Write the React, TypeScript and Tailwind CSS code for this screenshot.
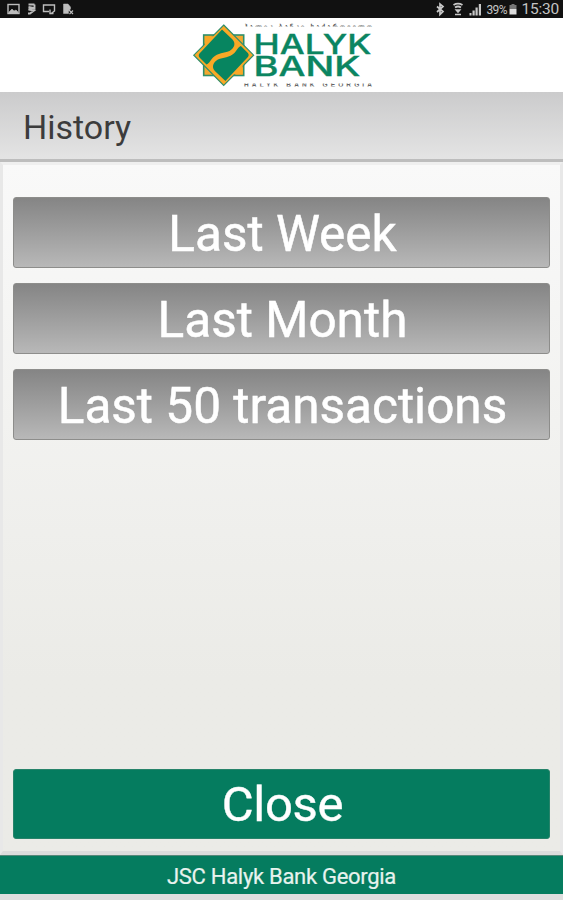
const periods = [
  { id: "week", label: "Last Week" },
  { id: "month", label: "Last Month" },
  { id: "fifty", label: "Last 50 transactions" },
];

function HalykLogo() {
  return (
    <svg width="184" height="66" viewBox="191 22 184 66" role="img" aria-label="Halyk Bank Georgia">
      <defs>
        <clipPath id="topLine">
          <rect x="240" y="23" width="134" height="3.6" />
        </clipPath>
        <clipPath id="bottomLine">
          <rect x="240" y="83.5" width="134" height="3" />
        </clipPath>
      </defs>

      {/* eight pointed star */}
      <rect x="203.7" y="35" width="40" height="40.5" fill="#f3a82f" stroke="#2f8f6b" strokeWidth="1.6" />
      <path d="M223.7 25 253.6 55.2 223.7 85.4 193.8 55.2Z" fill="#f9a826" stroke="#2f8f6b" strokeWidth="1.2" />
      <path d="M204.800 36.200h19.400l-9.800 9.800-9.600 9.800zM242.600 74.300h-19.400l9.800-9.800 9.600-9.800z" fill="#f9a826" />
      <path
        d="M222 29.500L232.500 39.500C236 43.500 234.500 48 229.500 51C224 53.500 218 52.500 213 57.500C210.500 60 209.500 63.500 206.500 64.500L199.500 57.500C198.500 56.500 198.500 54.500 199.500 53.500Z"
        fill="#078560"
      />
      <path
        d="M225.400 80.900L214.900 70.900C211.400 66.900 212.900 62.400 217.900 59.400C223.400 56.900 229.400 57.900 234.400 52.900C236.900 50.400 237.900 46.900 240.900 45.900L247.900 52.900C248.900 53.900 248.900 55.900 247.900 56.900Z"
        fill="#078560"
      />

      <text x="244" y="29" textLength="128" fontSize="6.5" fontWeight="700" clipPath="url(#topLine)" fill="#555" className="font-['DejaVu_Sans',sans-serif]">
        ჰალიკ ბანკი საქართველო
      </text>
      <g fill="#0b8561" stroke="#0b8561" strokeWidth="0.3" fontSize="26.5" fontWeight="500" className="font-['Inter',sans-serif]">
        <text x="253.500" y="53.500" textLength="118" lengthAdjust="spacingAndGlyphs">HALYK</text>
        <text x="253.500" y="76" textLength="107" lengthAdjust="spacingAndGlyphs">BANK</text>
      </g>
      <text x="244" y="86.500" textLength="128" fontSize="6.500" fontWeight="700" clipPath="url(#bottomLine)" fill="#666" className="font-['Liberation_Sans',sans-serif]">
        HALYK BANK GEORGIA
      </text>
    </svg>
  );
}

function StatusBar() {
  return (
    <div className="flex h-[18px] shrink-0 items-center justify-between bg-[#111] pl-[7px] pr-[4px] text-[#c4c4c4]">
      <svg width="68" height="18" viewBox="7 0 68 18" fill="none" stroke="#bdbdbd" strokeWidth="1.4">
        <rect x="8" y="4.5" width="11" height="9" />
        <path d="M9 12l3-3 2 2 2-1 2 2v1H9z" fill="#bdbdbd" strokeWidth="0.6" />
        <path d="M28.500 4.500h6M28.500 7l5 1-5 1.500 5.500 1-4 3h-2M34.500 4.500v5" strokeWidth="1.900" />
        <path d="M49 11.500h-5.500V5h11v6l-4 3M50 9.500v4h3.500" />
        <path d="M63.500 4h4.500l2.500 3v2l-2 2v2.500h-5z" fill="#bdbdbd" strokeWidth="0.5" />
        <path d="M69 10l4 4M73 10.500l-3.500 3.500" strokeWidth="1.100" />
      </svg>
      <div className="flex items-center">
        <svg width="48" height="18" viewBox="436 0 48 18" fill="none" stroke="#c8c8c8">
          <path d="M438 6.500l6 5-3 3V4l3 2.500-6 5.500" strokeWidth="1.700" />
          <path d="M454.500 5c3-1.800 6-1.800 9 0M456 7.500c2-1.300 4-1.300 6 0" strokeWidth="1.900" />
          <path d="M457 10h4l-2 2.200zM456 14.500h6" fill="#c8c8c8" strokeWidth="1.300" />
          <g fill="#c8c8c8" stroke="none">
            <rect x="470.500" y="13" width="2" height="2.500" />
            <rect x="473.500" y="10.500" width="2.200" height="5" />
            <rect x="476.500" y="7.500" width="2.200" height="8" />
            <rect x="479.800" y="4" width="2.200" height="11.500" />
          </g>
        </svg>
        <span className="ml-[3px] w-[22px] pt-px text-[12px] leading-[16px] tracking-[-0.6px]">39%</span>
        <svg width="10" height="18" viewBox="0 0 9 18">
          <path d="M3 4h3v1h2v4H1V5h2z" fill="#777" />
          <path d="M1 9h7v5.500H1z" fill="#ddd" />
        </svg>
        <span className="ml-[3px] text-[15.500px] leading-[18px] tracking-[-0.2px]">15:30</span>
      </div>
    </div>
  );
}

export default function App() {
  return (
    <div className="flex h-[900px] w-[563px] flex-col overflow-hidden bg-[#dedede] font-['Roboto',sans-serif]">
      <StatusBar />

      <header className="flex h-[74px] shrink-0 justify-center bg-white pr-[1px] pt-1 pl-[4px]">
        <HalykLogo />
      </header>

      <div className="flex h-[70px] shrink-0 items-center border-b-[3px] border-[#bdbdbd] bg-linear-to-b from-[#cbcbcc] to-[#e4e4e4] pt-[3px] pl-[23px]">
        <h1 className="text-[34px] leading-none text-[#3c3c3c]">History</h1>
      </div>

      <main className="flex h-[693px] shrink-0 flex-col border-x-[3px] border-t-[3px] border-b-[4px] border-t-[#efefef] border-x-[#e8e8e8] border-b-[#dcdcdc] bg-linear-to-b from-[#f9f9f9] to-[#ebebe7] to-75% px-[10px] pt-8 pb-[12px]">
        <div className="flex flex-col gap-[15px]">
          {periods.map((period) => (
            <button
              key={period.id}
              className="flex h-[71px] items-center justify-center rounded-[3px] border border-[#8d8d8b] bg-linear-to-b from-[#858585] to-[#b8b8b8] pt-[4px] pl-[2px] text-white"
            >
              <span className="text-[49.500px] leading-none [-webkit-text-stroke:0.5px_white]">{period.label}</span>
            </button>
          ))}
        </div>

        <button className="mt-auto flex h-[70px] items-center justify-center rounded-[3px] border border-[#27836a] bg-[#057c5f] pt-px pl-[2px] text-[49px] leading-none tracking-[-0.3px] text-white [-webkit-text-stroke:0.4px_white]">
          Close
        </button>
      </main>

      <footer className="flex h-[39px] shrink-0 items-center justify-center border-t border-[#58877a] bg-[#057c5f] pt-[3px] text-[22px] tracking-[-0.3px] text-[#e8f3ee] [-webkit-text-stroke:0.2px_#e8f3ee]">
        JSC Halyk Bank Georgia
      </footer>
    </div>
  );
}
